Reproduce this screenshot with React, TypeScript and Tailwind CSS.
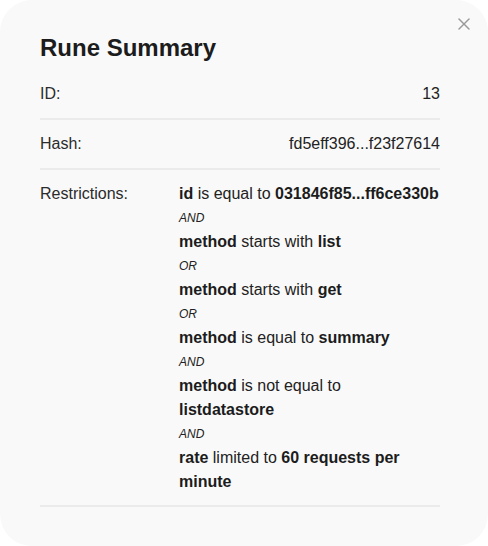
import { X } from "lucide-react";

type Part = { text: string; bold?: boolean };

const restrictions: { clause: Part[]; join?: string }[] = [
  {
    clause: [
      { text: "id", bold: true },
      { text: " is equal to " },
      { text: "031846f85...ff6ce330b", bold: true },
    ],
    join: "AND",
  },
  {
    clause: [
      { text: "method", bold: true },
      { text: " starts with " },
      { text: "list", bold: true },
    ],
    join: "OR",
  },
  {
    clause: [
      { text: "method", bold: true },
      { text: " starts with " },
      { text: "get", bold: true },
    ],
    join: "OR",
  },
  {
    clause: [
      { text: "method", bold: true },
      { text: " is equal to " },
      { text: "summary", bold: true },
    ],
    join: "AND",
  },
  {
    clause: [
      { text: "method", bold: true },
      { text: " is not equal to " },
      { text: "listdatastore", bold: true },
    ],
    join: "AND",
  },
  {
    clause: [
      { text: "rate", bold: true },
      { text: " limited to " },
      { text: "60 requests per minute", bold: true },
    ],
  },
];

const Row = ({
  label,
  children,
}: {
  label: string;
  children: React.ReactNode;
}) => (
  <div className="flex justify-between py-3 border-b-2 border-[#ebebeb]">
    <span className="text-[#2b2b2b]">{label}</span>
    {children}
  </div>
);

export default function App() {
  return (
    <div
      className="w-[488px] h-[546px] bg-white"
      style={{ fontFamily: '"Liberation Sans", Arial, sans-serif' }}
    >
      <div className="relative w-full h-full rounded-[32px] bg-[#f9f9f9] pl-10 pr-12 pt-[34px] text-[16px] leading-6 text-[#222]">
        <button className="absolute right-[14px] top-[14px] text-[#9a9a9a]">
          <X size={20} strokeWidth={1.8} />
        </button>
        <h1 className="text-[24px] leading-[28px] font-bold text-[#1c1c1c] mb-[8px]">
          Rune Summary
        </h1>
        <Row label="ID:">
          <span>13</span>
        </Row>
        <Row label="Hash:">
          <span>fd5eff396...f23f27614</span>
        </Row>
        <div className="flex pt-3 pb-[11px] border-b-2 border-[#ebebeb]">
          <span className="w-[139px] shrink-0 text-[#2b2b2b]">
            Restrictions:
          </span>
          <div className="flex flex-col">
            {restrictions.map((r, i) => (
              <div key={i}>
                <p>
                  {r.clause.map((p, j) =>
                    p.bold ? (
                      <b key={j} className="font-bold text-[#1c1c1c]">
                        {p.text}
                      </b>
                    ) : (
                      <span key={j}>{p.text}</span>
                    )
                  )}
                </p>
                {r.join && (
                  <p className="text-[12px] leading-6 italic text-[#222]">
                    {r.join}
                  </p>
                )}
              </div>
            ))}
          </div>
        </div>
      </div>
    </div>
  );
}
